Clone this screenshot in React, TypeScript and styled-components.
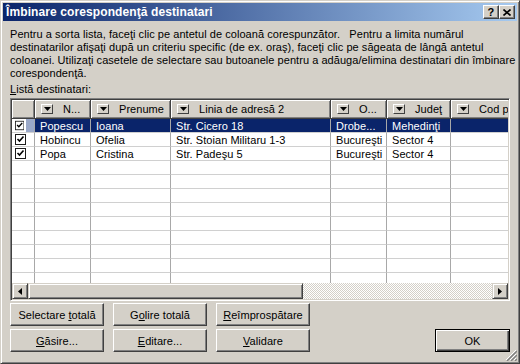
import React from "react";
import styled, { createGlobalStyle } from "styled-components";

const GlobalStyle = createGlobalStyle`
  html, body {
    margin: 0;
    padding: 0;
    background: #d4d0c8;
  }
  body {
    font-family: "Liberation Sans", Arial, sans-serif;
    font-size: 11px;
    letter-spacing: 0.05px;
    color: #000;
  }
  * {
    box-sizing: border-box;
  }
`;

const Window = styled.div`
  position: relative;
  width: 520px;
  height: 364px;
  display: flex;
  flex-direction: column;
  background: #d4d0c8;
  border: 1px solid;
  border-color: #d4d0c8 #404040 #404040 #d4d0c8;
  box-shadow: inset 1px 1px 0 #fff, inset -1px -1px 0 #808080;
  padding: 2px;
`;

const TitleBar = styled.div`
  height: 18px;
  display: flex;
  align-items: center;
  padding: 0 2px 0 3px;
  background: linear-gradient(to right, #0a246a, #a6caf0);
`;

const Title = styled.div`
  flex: 1;
  color: #fff;
  font-weight: bold;
  font-size: 12px;
  letter-spacing: 0.1px;
  white-space: nowrap;
`;

const CaptionButton = styled.div`
  width: 16px;
  height: 14px;
  display: flex;
  align-items: center;
  justify-content: center;
  background: #d4d0c8;
  border: 1px solid;
  border-color: #fff #404040 #404040 #fff;
  box-shadow: inset -1px -1px 0 #808080;
  font-weight: bold;
  font-size: 11px;
  line-height: 1;
`;

const Body = styled.div`
  flex: 1;
  display: flex;
  flex-direction: column;
  padding: 7px 7px 0 7px;
`;

const Description = styled.div`
  line-height: 13px;
  white-space: pre;
`;

const Label = styled.div`
  margin-top: 3px;
  line-height: 13px;
`;

const ListBox = styled.div`
  margin-top: 2px;
  height: 203px;
  display: flex;
  flex-direction: column;
  border: 1px solid;
  border-color: #808080 #fff #fff #808080;
  box-shadow: inset 1px 1px 0 #404040, inset -1px -1px 0 #d4d0c8;
  padding: 1px;
  background: #fff;
  overflow: hidden;
`;

const Viewport = styled.div`
  flex: 1;
  overflow: hidden;
`;

const columns = "23px 56px 80px 160px 56px 64px 90px";

const HeaderRow = styled.div`
  display: grid;
  grid-template-columns: ${columns};
  height: 19px;
`;

const HeadCell = styled.div`
  display: flex;
  align-items: center;
  gap: 10px;
  padding-left: 6px;
  background: #d4d0c8;
  border-right: 1px solid #404040;
  border-bottom: 1px solid #404040;
  box-shadow: inset 1px 1px 0 #fff, inset -1px -1px 0 #808080;
  white-space: nowrap;
  overflow: hidden;
`;

const DropButton = styled.span`
  flex: none;
  width: 12px;
  height: 10px;
  display: flex;
  align-items: center;
  justify-content: center;
  border: 1px solid;
  border-color: #fff #404040 #404040 #fff;
  background: #d4d0c8;
`;

const Row = styled.div`
  display: grid;
  grid-template-columns: ${columns};
  height: 14px;
`;

const Cell = styled.div<{ $selected?: boolean }>`
  display: flex;
  align-items: center;
  padding-left: 5px;
  white-space: nowrap;
  overflow: hidden;
  border-right: 1px solid #a8a8a8;
  border-bottom: 1px solid #d0d0d0;
  background: ${(p) => (p.$selected ? "#0a246a" : "#fff")};
  color: ${(p) => (p.$selected ? "#fff" : "#000")};
`;

const CheckCell = styled.div`
  display: flex;
  align-items: center;
  padding-left: 3px;
  border-right: 1px solid #a8a8a8;
  border-bottom: 1px solid #d0d0d0;
  background: #fff;
`;

const Focus = styled.span`
  margin-left: 2px;
  width: 9px;
  height: 13px;
  background: #9aa8c8;
`;

const ScrollBar = styled.div`
  height: 16px;
  display: flex;
`;

const ArrowButton = styled.div`
  width: 16px;
  height: 16px;
  display: flex;
  align-items: center;
  justify-content: center;
  background: #d4d0c8;
  border: 1px solid;
  border-color: #d4d0c8 #404040 #404040 #d4d0c8;
  box-shadow: inset 1px 1px 0 #fff, inset -1px -1px 0 #808080;
`;

const Thumb = styled(ArrowButton)<{ $w: number }>`
  width: ${(p) => p.$w}px;
`;

const Track = styled.div`
  flex: 1;
  background: repeating-conic-gradient(#fff 0 25%, #d4d0c8 0 50%) 0 0 / 2px 2px;
`;

const ButtonRow = styled.div<{ $top: number }>`
  display: flex;
  gap: 9px;
  margin-top: ${(p) => p.$top}px;
`;

const Button = styled.div<{ $w?: number; $default?: boolean }>`
  width: ${(p) => p.$w ?? 94}px;
  height: 23px;
  display: flex;
  align-items: center;
  justify-content: center;
  background: #d4d0c8;
  border: 1px solid;
  border-color: ${(p) => (p.$default ? "#000" : "#fff #404040 #404040 #fff")};
  box-shadow: ${(p) =>
    p.$default
      ? "inset 1px 1px 0 #fff, inset -1px -1px 0 #404040, inset -2px -2px 0 #808080"
      : "inset -1px -1px 0 #808080"};
  white-space: nowrap;
`;

const Spacer = styled.div`
  flex: 1;
`;

const Grip = styled.svg`
  position: absolute;
  right: 2px;
  bottom: 2px;
`;

const DownTriangle = () => (
  <svg width="7" height="4" viewBox="0 0 7 4">
    <path d="M0 0h7L3.5 4z" fill="#000" />
  </svg>
);

const CheckBox = () => (
  <svg width="11" height="11" viewBox="0 0 11 11">
    <rect x="0.5" y="0.5" width="10" height="10" fill="#fff" stroke="#1c1c1c" />
    <path d="M2.5 5l2 2 4-4.5" fill="none" stroke="#000" strokeWidth="1.6" />
  </svg>
);

const headers = ["N...", "Prenume", "Linia de adresă 2", "O...", "Judeţ", "Cod p"];

const rows = [
  ["Popescu", "Ioana", "Str. Cicero 18", "Drobe...", "Mehedinţi", ""],
  ["Hobincu", "Ofelia", "Str. Stoian Militaru 1-3", "Bucureşti", "Sector 4", ""],
  ["Popa", "Cristina", "Str. Padeşu 5", "Bucureşti", "Sector 4", ""],
];

const emptyRows = Array.from({ length: 10 });

export default function App() {
  return (
    <>
      <GlobalStyle />
      <Window>
        <TitleBar>
          <Title>Îmbinare corespondenţă destinatari</Title>
          <CaptionButton>?</CaptionButton>
          <CaptionButton>
            <svg width="8" height="7" viewBox="0 0 8 7">
              <path d="M0.5 0.5l7 6M7.5 0.5l-7 6" stroke="#000" strokeWidth="1.6" />
            </svg>
          </CaptionButton>
        </TitleBar>
        <Body>
          <Description>
            {"Pentru a sorta lista, faceţi clic pe antetul de coloană corespunzător.   Pentru a limita numărul"}
            <br />
            {"destinatarilor afişaţi după un criteriu specific (de ex. oraş), faceţi clic pe săgeata de lângă antetul"}
            <br />
            {"coloanei. Utilizaţi casetele de selectare sau butoanele pentru a adăuga/elimina destinatari din îmbinare"}
            <br />
            {"corespondenţă."}
          </Description>
          <Label>
            <u>L</u>istă destinatari:
          </Label>
          <ListBox>
            <Viewport>
              <HeaderRow>
                <HeadCell />
                {headers.map((h) => (
                  <HeadCell key={h}>
                    <DropButton>
                      <DownTriangle />
                    </DropButton>
                    <span>{h}</span>
                  </HeadCell>
                ))}
              </HeaderRow>
              {rows.map((r, i) => (
                <Row key={i}>
                  <CheckCell>
                    <CheckBox />
                    {i === 0 && <Focus />}
                  </CheckCell>
                  {r.map((c, j) => (
                    <Cell key={j} $selected={i === 0}>
                      {c}
                    </Cell>
                  ))}
                </Row>
              ))}
              {emptyRows.map((_, i) => (
                <Row key={"e" + i}>
                  <CheckCell />
                  {headers.map((h) => (
                    <Cell key={h} />
                  ))}
                </Row>
              ))}
            </Viewport>
            <ScrollBar>
              <ArrowButton>
                <svg width="4" height="7" viewBox="0 0 4 7">
                  <path d="M4 0v7L0 3.5z" fill="#000" />
                </svg>
              </ArrowButton>
              <Thumb $w={275} />
              <Track />
              <ArrowButton>
                <svg width="4" height="7" viewBox="0 0 4 7">
                  <path d="M0 0v7l4-3.5z" fill="#000" />
                </svg>
              </ArrowButton>
            </ScrollBar>
          </ListBox>
          <ButtonRow $top={2}>
            <Button>
              <span>
                Selectare <u>t</u>otală
              </span>
            </Button>
            <Button>
              <span>
                G<u>o</u>lire totală
              </span>
            </Button>
            <Button>
              <span>
                <u>R</u>eîmprospătare
              </span>
            </Button>
          </ButtonRow>
          <ButtonRow $top={3}>
            <Button>
              <span>
                <u>G</u>ăsire...
              </span>
            </Button>
            <Button>
              <span>
                <u>E</u>ditare...
              </span>
            </Button>
            <Button>
              <span>
                <u>V</u>alidare
              </span>
            </Button>
            <Spacer />
            <Button $w={75} $default>
              OK
            </Button>
          </ButtonRow>
        </Body>
        <Grip width="12" height="12" viewBox="0 0 12 12">
          <path d="M11 1L1 11M11 5L5 11M11 9L9 11" stroke="#fff" strokeWidth="1" />
          <path d="M12 2L2 12M12 6L6 12M12 10L10 12" stroke="#808080" strokeWidth="1.4" />
        </Grip>
      </Window>
    </>
  );
}
